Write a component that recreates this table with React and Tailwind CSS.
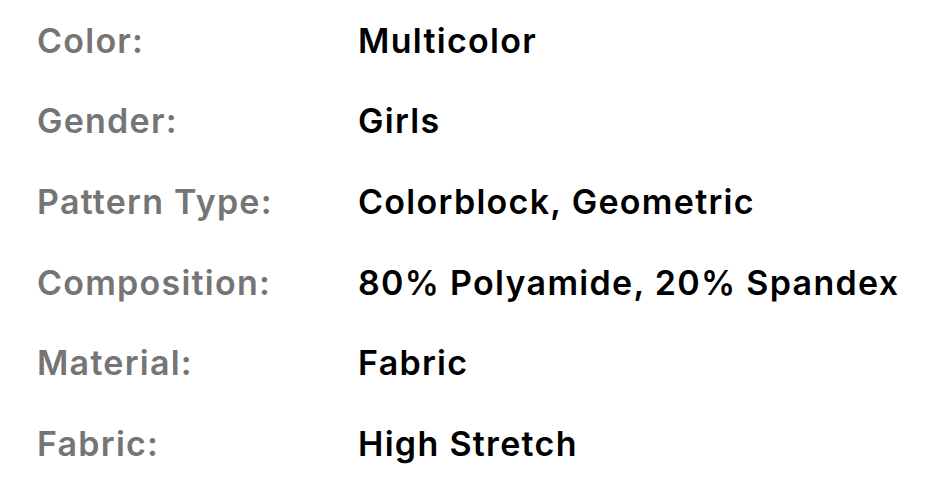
import React from 'react';

const specs = [
  ['Color:', 'Multicolor'],
  ['Gender:', 'Girls'],
  ['Pattern Type:', 'Colorblock, Geometric'],
  ['Composition:', '80% Polyamide, 20% Spandex'],
  ['Material:', 'Fabric'],
  ['Fabric:', 'High Stretch'],
];

const App = () => {
  return (
    <div className="w-[927px] h-[487px] bg-white font-['Inter',sans-serif] overflow-hidden">
      <div className="pl-[37px]">
        {specs.map(([label, value], i) => (
          <div key={i} className="flex items-center h-[80.6px]">
            <span className="w-[321px] shrink-0 text-[34px] font-semibold text-[#757575] tracking-[1.25px]">{label}</span>
            <span className="text-[34px] font-semibold text-black tracking-[1.3px]">{value}</span>
          </div>
        ))}
      </div>
    </div>
  );
};

export default App;
